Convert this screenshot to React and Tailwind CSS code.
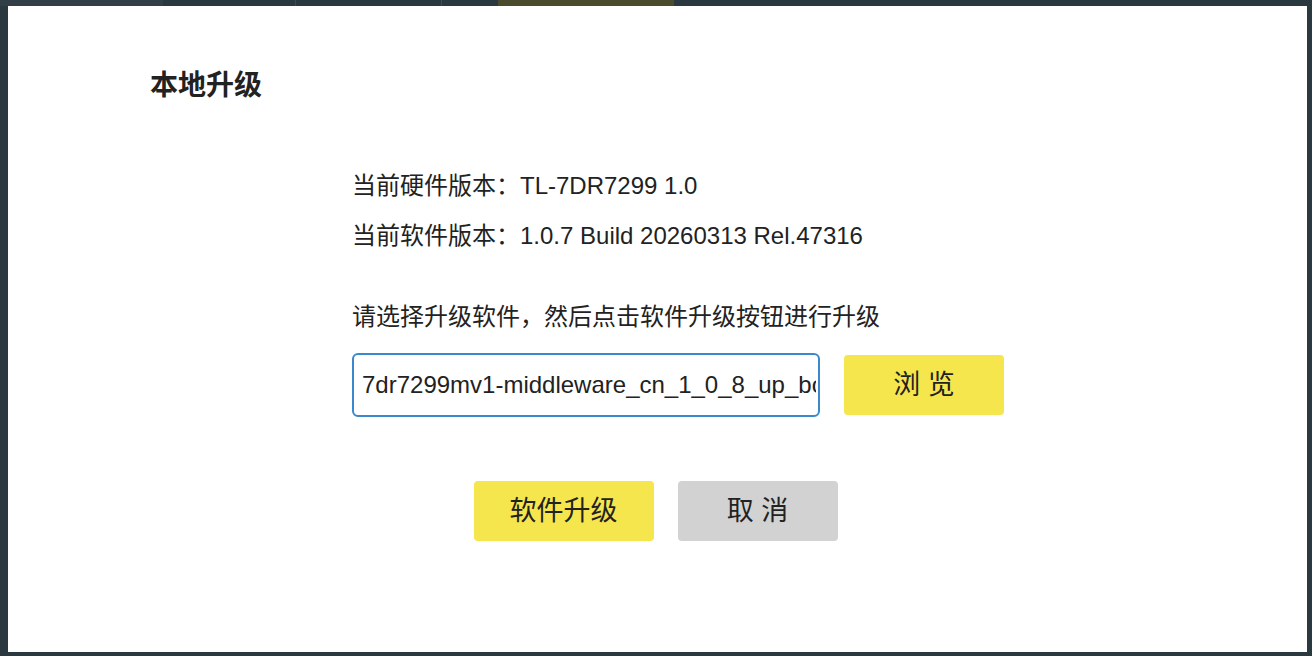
export default function App() {
  const font = { fontFamily: "'Liberation Sans', 'Noto Sans CJK SC', sans-serif" };

  return (
    <div className="w-[1312px] h-[656px] bg-[#2a3940] overflow-hidden" style={font}>
      {/* dimmed page behind the dialog */}
      <div className="flex h-[6px]">
        <div className="w-[163px] bg-[#323f46]" />
        <div className="w-[132px]" />
        <div className="w-px bg-[#3f4b51]" />
        <div className="w-[145px]" />
        <div className="w-px bg-[#3f4b51]" />
        <div className="w-[56px]" />
        <div className="w-[176px] bg-[#4a4a2c]" />
      </div>

      {/* dialog */}
      <div className="ml-[8px] w-[1299px] h-[646px] bg-white pt-[60px]">
        <h2 className="pl-[142px] text-[28px] leading-[40px] font-bold text-[#222]">本地升级</h2>

        <div className="pl-[344px] mt-[55px] text-[24px] text-[#222]">
          <p className="leading-[50px]">当前硬件版本：TL-7DR7299 1.0</p>
          <p className="leading-[50px]">当前软件版本：1.0.7 Build 20260313 Rel.47316</p>
          <p className="leading-[50px] mt-[31px]">请选择升级软件，然后点击软件升级按钮进行升级</p>

          <div className="flex items-center gap-[24px] mt-[11px]">
            <input
              readOnly
              value="7dr7299mv1-middleware_cn_1_0_8_up_boot(260320).bin"
              className="w-[468px] h-[64px] border-2 border-[#3b88cc] rounded-[6px] pl-[8px] pr-[2px] text-[24px] text-[#222] outline-none"
              style={font}
            />
            <button className="w-[160px] h-[60px] rounded-[4px] bg-[#f6e64e] text-[27px] text-[#222]">
              浏 览
            </button>
          </div>
        </div>

        <div className="flex justify-center gap-[24px] mt-[64px] pr-[4px]">
          <button className="w-[180px] h-[60px] rounded-[4px] bg-[#f6e64e] text-[27px] text-[#222]">
            软件升级
          </button>
          <button className="w-[160px] h-[60px] rounded-[4px] bg-[#d2d2d2] text-[27px] text-[#222]">
            取 消
          </button>
        </div>
      </div>
    </div>
  );
}
